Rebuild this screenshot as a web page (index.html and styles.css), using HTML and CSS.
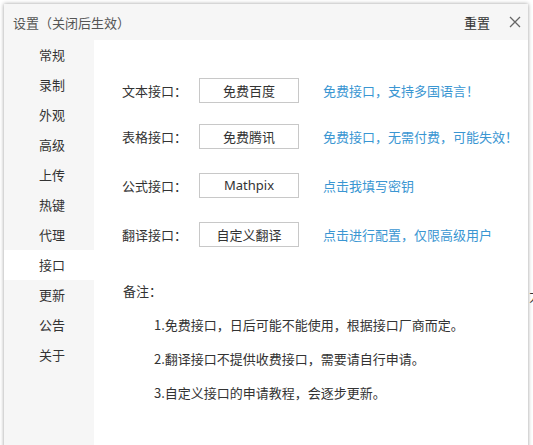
FILE: index.html
```html
<!DOCTYPE html>
<html lang="zh-CN">
<head>
    <meta charset="UTF-8">
    <title>设置</title>
    <link rel="stylesheet" href="styles.css">
</head>
<body>
    <div class="dialog">
        <div class="header">
            <span class="title">设置（关闭后生效）</span>
            <span class="reset">重置</span>
            <svg class="close" width="12" height="12" viewBox="0 0 12 12">
                <path d="M1 1L11 11M11 1L1 11" stroke="#666" stroke-width="1.3" fill="none"/>
            </svg>
        </div>
        <div class="body">
            <ul class="menu">
                <li>常规</li>
                <li>录制</li>
                <li>外观</li>
                <li>高级</li>
                <li>上传</li>
                <li>热键</li>
                <li>代理</li>
                <li class="active">接口</li>
                <li>更新</li>
                <li>公告</li>
                <li>关于</li>
            </ul>
            <div class="content">
                <div class="row first">
                    <span class="label">文本接口：</span>
                    <span class="box">免费百度</span>
                    <span class="hint">免费接口，支持多国语言！</span>
                </div>
                <div class="row">
                    <span class="label">表格接口：</span>
                    <span class="box">免费腾讯</span>
                    <span class="hint">免费接口，无需付费，可能失效！</span>
                </div>
                <div class="row">
                    <span class="label">公式接口：</span>
                    <span class="box latin">Mathpix</span>
                    <span class="hint">点击我填写密钥</span>
                </div>
                <div class="row">
                    <span class="label">翻译接口：</span>
                    <span class="box">自定义翻译</span>
                    <span class="hint">点击进行配置，仅限高级用户</span>
                </div>
                <div class="notes">
                    <p class="notes-title">备注：</p>
                    <p>1.免费接口，日后可能不能使用，根据接口厂商而定。</p>
                    <p>2.翻译接口不提供收费接口，需要请自行申请。</p>
                    <p>3.自定义接口的申请教程，会逐步更新。</p>
                </div>
            </div>
        </div>
    </div>
    <span class="behind">力</span>
</body>
</html>
```

FILE: styles.css
```css
body {
    margin: 0;
    background: #fff;
    font-family: "Noto Sans CJK SC", "Noto Sans", sans-serif;
    font-size: 13px;
    color: #333;
    overflow: hidden;
    height: 445px;
}
.dialog {
    margin: 4px 5px 0 4px;
    background: #f6f6f6;
    box-shadow: 0 0 4px rgba(0, 0, 0, 0.4);
    height: 460px;
    display: flex;
    flex-direction: column;
}
.header {
    height: 36px;
    display: flex;
    align-items: center;
    padding: 0 7px 0 9px;
}
.title {
    color: #555;
    flex: 1;
}
.reset {
    color: #333;
    margin-right: 19px;
}
.close {
    display: block;
}
.body {
    flex: 1;
    display: flex;
}
.menu {
    list-style: none;
    margin: 0;
    padding: 0;
    width: 90px;
}
.menu li {
    height: 30px;
    line-height: 30px;
    padding-left: 35px;
}
.menu li.active {
    background: #fff;
}
.content {
    flex: 1;
    background: #fff;
    padding: 38px 0 0 28px;
}
.row {
    display: flex;
    align-items: center;
    height: 25px;
    margin-bottom: 24px;
}
.row.first {
    margin-bottom: 21px;
}
.label {
    width: 77px;
}
.box {
    width: 98px;
    height: 23px;
    border: 1px solid #c8c8c8;
    text-align: center;
    line-height: 23px;
}
.latin {
    font-family: "Noto Sans", sans-serif;
}
.hint {
    margin-left: 24px;
    color: #3a96d2;
}
.notes {
    margin-top: 34px;
}
.notes p {
    margin: 0 0 15px 32px;
    line-height: 19px;
}
.notes p.notes-title {
    margin-left: 1px;
}
.behind {
    position: absolute;
    left: 529px;
    top: 286px;
    color: #333;
}
```
